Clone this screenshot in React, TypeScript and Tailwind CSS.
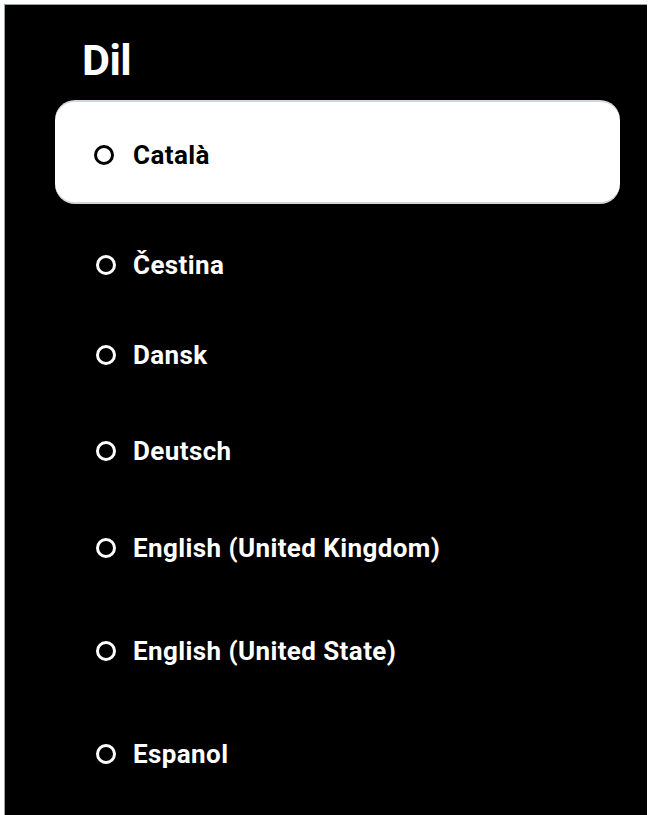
const languages = [
  { label: "Čestina", mt: "mt-[41px]" },
  { label: "Dansk", mt: "mt-[50px]" },
  { label: "Deutsch", mt: "mt-[56px]" },
  { label: "English (United Kingdom)", mt: "mt-[57px]" },
  { label: "English (United State)", mt: "mt-[63px]" },
  { label: "Espanol", mt: "mt-[63px]" },
];

function Radio({ dark }: { dark?: boolean }) {
  return (
    <span
      className={
        "block h-[20px] w-[20px] rounded-full border-[3px] " +
        (dark ? "border-black" : "border-white")
      }
    />
  );
}

export default function App() {
  return (
    <div
      className="min-h-[815px] bg-white pl-[4px] pt-[4px]"
      style={{ fontFamily: "Roboto, 'Liberation Sans', sans-serif" }}
    >
      <div className="flex h-[811px] w-[643px] flex-col border-l border-t border-gray-400 bg-black">
        <h1 className="ml-[77px] mt-[34px] text-[43px] font-bold leading-none tracking-[-0.5px] text-white">
          Dil
        </h1>

        <div className="ml-[50px] mt-[18px] flex h-[104px] w-[565px] items-center rounded-[20px] border-y-2 border-gray-300 bg-white pt-[5px]">
          <div className="flex w-[78px] shrink-0 justify-end pr-[19px]">
            <Radio dark />
          </div>
          <span className="text-[26px] font-bold leading-[40px] tracking-[0.4px] text-black">Català</span>
        </div>

        {languages.map((l) => (
          <div key={l.label} className={"flex h-[40px] items-center " + l.mt}>
            <div className="flex w-[128px] shrink-0 justify-end pr-[17px]">
              <Radio />
            </div>
            <span className="text-[26px] font-bold leading-[40px] tracking-[0.4px] text-white">{l.label}</span>
          </div>
        ))}
      </div>
    </div>
  );
}
